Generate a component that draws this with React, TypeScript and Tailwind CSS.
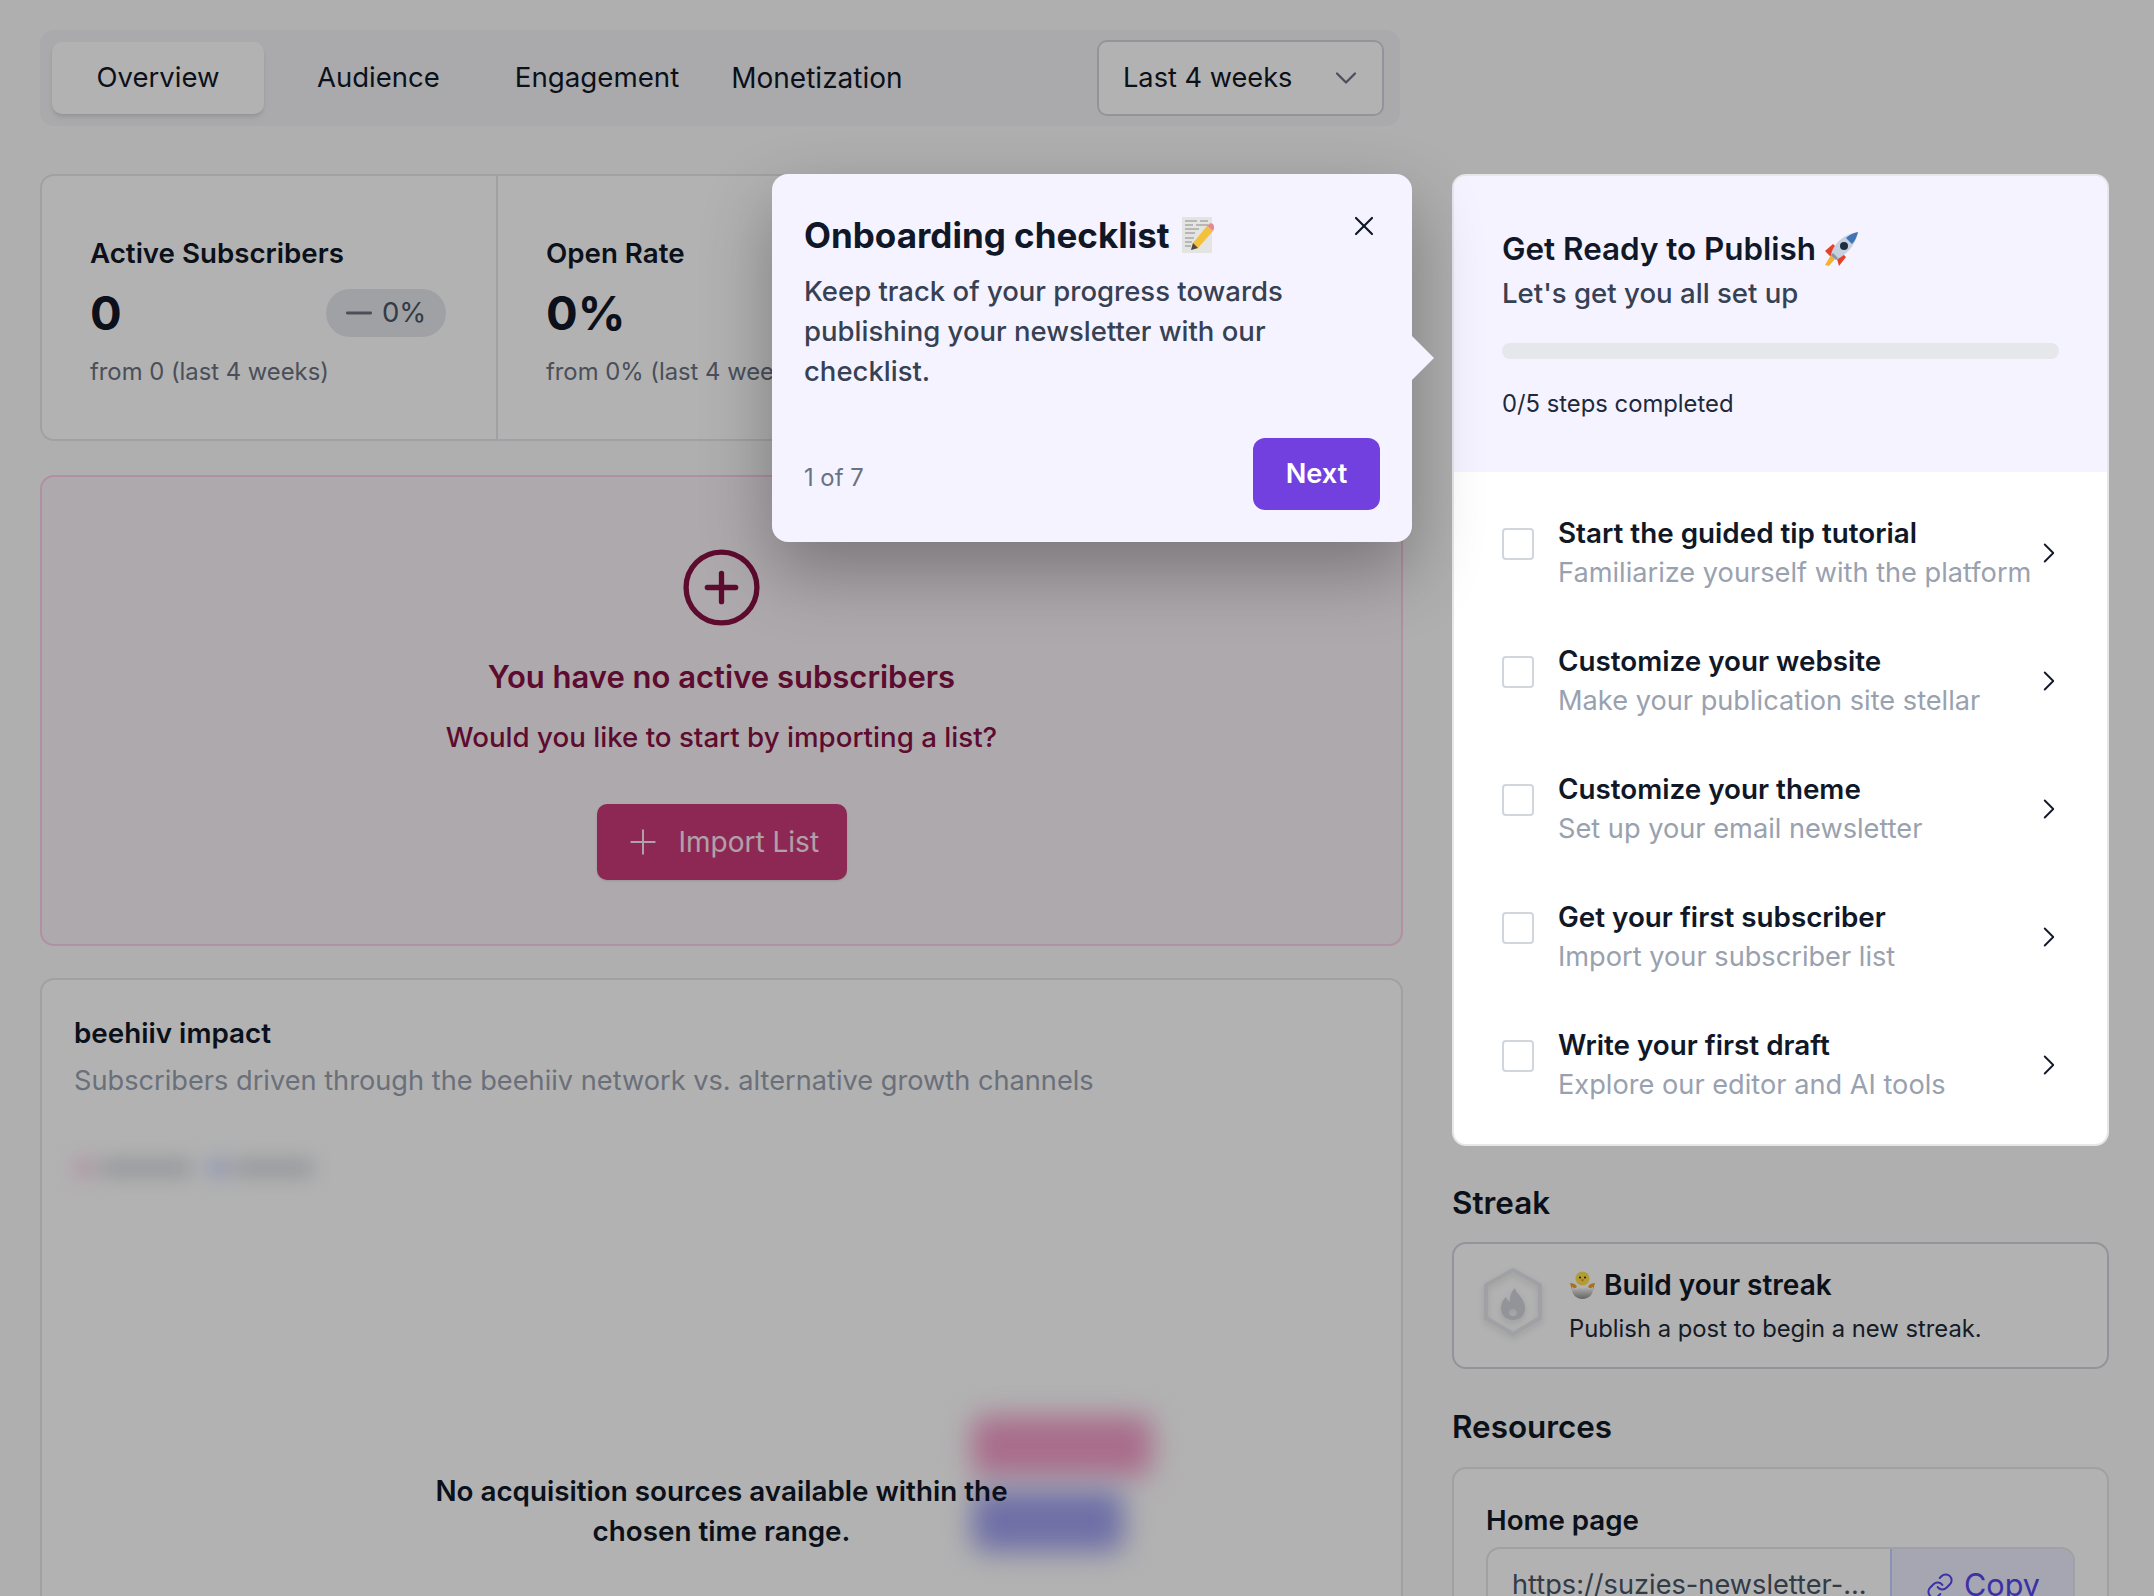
import { ChevronDown, ChevronRight, CirclePlus, Link, Minus, Plus, X } from "lucide-react";

// ─── Emoji drawings ───────────────────────────────────────────
const MemoEmoji = () => (
  <svg width="32" height="36" viewBox="0 0 32 36" className="shrink-0">
    <rect x="0" y="0" width="30" height="36" fill="#e4e4e2" />
    <g stroke="#8a8a88" strokeWidth="1">
      <path d="M3 4h12M18 4h8M3 8h8M14 8h12M3 12h14M3 16h10M3 21h9M3 25h7M3 29h6" />
    </g>
    <path d="M9 33l2-7L25 9l6 5-15 17z" fill="#f3c13a" />
    <path d="M9 33l2-7 5 5z" fill="#4a4a48" />
    <path d="M25 9l2-2c1-1 3-1 4 0l1 2c1 1 0 3-1 5z" fill="#e58a90" />
  </svg>
);

const RocketEmoji = () => (
  <svg width="34" height="34" viewBox="0 0 34 34" className="shrink-0">
    <path d="M1 19l8-7 13 13-7 9-2-7-6-2z" fill="#e4412b" />
    <path d="M1 33l6-10 4 4-6 7z" fill="#f5b22d" />
    <path d="M7 23C9 11 21 2 34 0c-2 13-12 23-22 28z" fill="#c5d1de" />
    <path d="M34 0c-5 1-9 3-12 6l6 6c3-3 5-8 6-12z" fill="#3f74b5" />
    <circle cx="20" cy="14" r="4" fill="#1f2e44" />
    <path d="M12 28l-5-5 2-2 5 5z" fill="#8797a8" />
  </svg>
);

const ChickEmoji = () => (
  <svg width="27" height="28" viewBox="0 0 27 28" className="shrink-0">
    <defs>
      <linearGradient id="eggShade" x1="0" y1="0" x2="0" y2="1">
        <stop offset="0%" stopColor="#ffffff" />
        <stop offset="100%" stopColor="#8f8f8b" />
      </linearGradient>
    </defs>
    <circle cx="13.500" cy="7.500" r="7" fill="#ffe14d" />
    <path d="M1 12c3 0 6 1 7 4l-5 3zM26 12c-3 0-6 1-7 4l5 3z" fill="#f2a12c" />
    <circle cx="11" cy="6.500" r="1" fill="#2b2113" />
    <circle cx="16" cy="6.500" r="1" fill="#2b2113" />
    <path d="M12 8.500h3l-1.500 2z" fill="#e0701c" />
    <path d="M3 16l4 2 3-2 3.500 2 3.500-2 3 2 4-2c1 7-4 12-10.500 12S2 23 3 16z" fill="url(#eggShade)" />
  </svg>
);

const HexFlame = () => (
  <svg width="62" height="70" viewBox="0 0 62 70" className="shrink-0 drop-shadow-md">
    <path d="M31 3l27 15v33L31 67 4 51V18z" fill="none" stroke="#e5e7eb" strokeWidth="4" strokeLinejoin="round" />
    <path
      d="M33 21c1 6 10 10 10 20 0 7-5 12-12 12s-12-5-12-12c0-5 2-8 5-11 1 3 2 4 4 5 0-6 1-10 5-14zm-2 21c-3 0-4 2-4 4s2 3 4 3 4-1 4-3-1-4-4-4z"
      fill="#d1d5db"
      fillRule="evenodd"
    />
  </svg>
);

// ─── Stat column ──────────────────────────────────────────────
const Stat = ({ title, value, from, badge }: { title: string; value: string; from: string; badge?: boolean }) => (
  <div className="w-[456px] shrink-0 border-r-2 border-gray-200 pl-[48px] pr-[50px] pt-[59px] overflow-hidden whitespace-nowrap">
    <p className="text-[27.700px] leading-[36px] font-semibold text-gray-900">{title}</p>
    <div className="flex items-center justify-between mt-[12px] h-[60px]">
      <span className="text-[47px] leading-[60px] font-bold text-gray-900">{value}</span>
      {badge && (
        <span className="flex items-center gap-[3px] h-[48px] w-[120px] pl-[13px] rounded-full bg-gray-200 text-[27.500px] text-gray-600">
          <Minus size={40} strokeWidth={1.7} className="text-gray-500" />
          0%
        </span>
      )}
    </div>
    <p className="text-[23.800px] leading-[36px] text-gray-500 mt-[11px]">{from}</p>
  </div>
);

// ─── Checklist row ────────────────────────────────────────────
const steps = [
  ["Start the guided tip tutorial", "Familiarize yourself with the platform"],
  ["Customize your website", "Make your publication site stellar"],
  ["Customize your theme", "Set up your email newsletter"],
  ["Get your first subscriber", "Import your subscriber list"],
  ["Write your first draft", "Explore our editor and AI tools"],
];

const StepRow = ({ title, sub }: { title: string; sub: string }) => (
  <div className="flex items-center h-[128px] pl-[48px] pr-[41px]">
    <div className="w-[32px] h-[32px] -mt-[18px] rounded-[4px] border-2 border-gray-300 bg-white shrink-0" />
    <div className="ml-[24px] flex-1 min-w-0 whitespace-nowrap">
      <p className="text-[27.800px] leading-[40px] font-semibold text-gray-900">{title}</p>
      <p className="text-[27.200px] leading-[40px] text-gray-400">{sub}</p>
    </div>
    <ChevronRight size={34} strokeWidth={1.3} className="text-gray-900 shrink-0" />
  </div>
);

export default function App() {
  return (
    <div className="relative h-[1596px] overflow-hidden bg-[#f9fbfa] font-['Inter',sans-serif] flex gap-[49px] pl-[40px] pr-[45px] pt-[30px]">
      {/* Main column */}
      <div className="relative w-[1363px] shrink-0">
        {/* Tabs */}
        <div className="flex items-center h-[96px] w-[1360px] rounded-[14px] bg-[#f4f4f7] pl-[12px] pr-[16px]">
          <div className="flex items-center justify-center w-[212px] h-[72px] rounded-[10px] bg-white shadow-md text-[27.500px] text-gray-900">
            Overview
          </div>
          <span className="ml-[53px] text-[27.500px] text-gray-900">Audience</span>
          <span className="ml-[75px] text-[27.700px] text-gray-900">Engagement</span>
          <span className="ml-[52px] text-[28px] text-gray-900">Monetization</span>
          <div className="ml-auto flex items-center justify-between w-[287px] h-[76px] rounded-[10px] border-2 border-gray-300 bg-white pl-[24px] pr-[18px] text-[27.200px] text-gray-900">
            Last 4 weeks
            <ChevronDown size={36} strokeWidth={1.5} className="text-gray-500" />
          </div>
        </div>

        {/* Stats */}
        <div className="flex mt-[48px] h-[267px] rounded-[14px] border-2 border-gray-200 bg-white overflow-hidden">
          <Stat title="Active Subscribers" value="0" from="from 0 (last 4 weeks)" badge />
          <Stat title="Open Rate" value="0%" from="from 0% (last 4 weeks)" />
        </div>

        {/* Import prompt */}
        <div className="flex flex-col items-center mt-[34px] h-[471px] rounded-[14px] border-2 border-pink-200 bg-[#faf3f8] pt-[68px]">
          <CirclePlus size={85} strokeWidth={1.5} className="text-pink-900" />
          <p className="mt-[25px] text-[31px] leading-[44px] font-semibold text-pink-900">You have no active subscribers</p>
          <p className="mt-[16px] text-[27.700px] leading-[44px] font-medium text-pink-900">Would you like to start by importing a list?</p>
          <div className="mt-[45px] flex items-center gap-[16px] h-[76px] w-[250px] pl-[26px] rounded-[10px] bg-[#c93a78] text-[28px] text-pink-100 shadow-sm">
            <Plus size={40} strokeWidth={1.2} />
            Import List
          </div>
        </div>

        {/* beehiiv impact */}
        <div className="relative mt-[32px] h-[700px] rounded-[14px] border-2 border-gray-200 bg-white px-[32px] pt-[31px]">
          <p className="text-[27.800px] leading-[44px] font-semibold text-gray-900">beehiiv impact</p>
          <p className="mt-[4px] text-[27.200px] leading-[44px] text-gray-400">
            Subscribers driven through the beehiiv network vs. alternative growth channels
          </p>
          <div className="flex gap-[16px] mt-[52px] blur-[10px]">
            <div className="flex items-center gap-[6px] w-[118px] h-[26px]">
              <span className="w-[20px] h-[20px] rounded-full bg-pink-200" />
              <span className="flex-1 h-[16px] bg-gray-300" />
            </div>
            <div className="flex items-center gap-[6px] w-[105px] h-[26px]">
              <span className="w-[20px] h-[20px] rounded-full bg-indigo-200" />
              <span className="flex-1 h-[16px] bg-gray-300" />
            </div>
          </div>
          <div className="absolute left-[930px] top-[436px] w-[180px] h-[60px] rounded-[12px] bg-[#f29cc8] blur-[14px]" />
          <div className="absolute left-[930px] top-[510px] w-[152px] h-[62px] rounded-[12px] bg-[#a0a0f0] blur-[14px]" />
          <p className="absolute left-0 right-0 top-[491px] text-center text-[27.800px] leading-[40px] font-semibold text-gray-900">
            No acquisition sources available within the
            <br />
            chosen time range.
          </p>
        </div>

        {/* Tour popover */}
        <div className="absolute z-30 left-[732px] top-[144px] w-[640px] h-[368px] rounded-[16px] bg-[#f5f3ff] shadow-[0_30px_70px_rgba(0,0,0,0.3)] pl-[32px] pr-[32px] pt-[34px]">
          <div className="absolute -right-[22px] top-[162px] w-0 h-0 border-y-[22px] border-y-transparent border-l-[22px] border-l-[#f5f3ff]" />
          <X size={32} strokeWidth={1.6} className="absolute right-[32px] top-[36px] text-gray-900" />
          <div className="flex items-center gap-[12px]">
            <h2 className="text-[35px] leading-[54px] font-bold text-gray-900 whitespace-nowrap">Onboarding checklist</h2>
            <MemoEmoji />
          </div>
          <p className="mt-[9px] w-[520px] text-[27.500px] leading-[40px] font-medium text-gray-700">
            Keep track of your progress towards publishing your newsletter with our checklist.
          </p>
          <div className="flex items-center justify-between mt-[47px]">
            <span className="mt-[7px] text-[23.800px] text-gray-500">1 of 7</span>
            <div className="flex items-center justify-center w-[127px] h-[72px] rounded-[12px] bg-[#7340e0] text-[27.200px] font-semibold text-white">
              Next
            </div>
          </div>
        </div>
      </div>

      {/* Sidebar */}
      <div className="w-[657px] shrink-0 pt-[144px]">
        <div className="relative z-20 h-[972px] rounded-[14px] border-2 border-gray-200 bg-white overflow-hidden">
          <div className="h-[296px] bg-[#f5f3ff] pl-[48px] pr-[48px] pt-[52px]">
            <div className="flex items-center gap-[8px]">
              <h3 className="text-[31.400px] leading-[42px] font-semibold text-gray-900 whitespace-nowrap">Get Ready to Publish</h3>
              <RocketEmoji />
            </div>
            <p className="mt-[1px] text-[27.600px] leading-[44px] font-medium text-gray-700">Let's get you all set up</p>
            <div className="mt-[28px] h-[16px] rounded-full bg-gray-200" />
            <p className="mt-[27px] text-[23.800px] leading-[36px] text-gray-800">0/5 steps completed</p>
          </div>
          <div className="pt-[17px]">
            {steps.map(([title, sub]) => (
              <StepRow key={title} title={title} sub={sub} />
            ))}
          </div>
        </div>

        <h3 className="mt-[35px] text-[31.400px] leading-[44px] font-semibold text-gray-900">Streak</h3>
        <div className="flex mt-[17px] h-[127px] rounded-[14px] border-2 border-gray-300 bg-white pl-[28px] pt-[23px]">
          <HexFlame />
          <div className="ml-[25px]">
            <div className="flex items-center gap-[8px]">
              <ChickEmoji />
              <span className="text-[28px] leading-[36px] font-semibold text-gray-900">Build your streak</span>
            </div>
            <p className="mt-[8px] text-[23.800px] leading-[36px] text-gray-800">Publish a post to begin a new streak.</p>
          </div>
        </div>

        <h3 className="mt-[36px] text-[31.400px] leading-[44px] font-semibold text-gray-900">Resources</h3>
        <div className="mt-[18px] h-[200px] rounded-[14px] border-2 border-gray-200 bg-white px-[32px] pt-[33px]">
          <p className="text-[27.700px] leading-[36px] font-semibold text-gray-900">Home page</p>
          <div className="flex mt-[9px] h-[76px] rounded-[14px] border-2 border-gray-200 overflow-hidden">
            <span className="flex-1 min-w-0 pl-[24px] pt-[16px] text-[27.200px] text-gray-600 truncate">https://suzies-newsletter-...</span>
            <div className="flex gap-[10px] items-start pt-[13px] pl-[34px] w-[183px] shrink-0 border-l-2 border-indigo-200 bg-[#eceeff] text-[30.600px] text-[#5646ec]">
              <Link size={28} strokeWidth={1.7} className="mt-[10px]" />
              Copy
            </div>
          </div>
        </div>
      </div>

      {/* Dim layer */}
      <div className="absolute inset-0 z-10 bg-black/30" />
    </div>
  );
}
